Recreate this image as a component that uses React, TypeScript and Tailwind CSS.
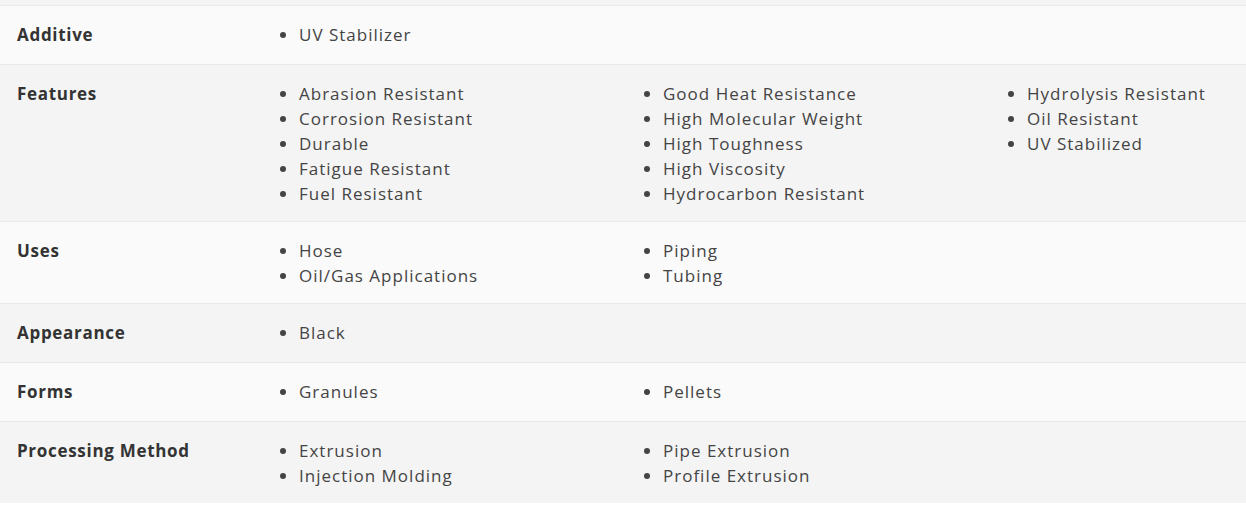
const rows: { label: string; cols: string[][] }[] = [
  { label: 'Additive', cols: [['UV Stabilizer']] },
  {
    label: 'Features',
    cols: [
      ['Abrasion Resistant', 'Corrosion Resistant', 'Durable', 'Fatigue Resistant', 'Fuel Resistant'],
      ['Good Heat Resistance', 'High Molecular Weight', 'High Toughness', 'High Viscosity', 'Hydrocarbon Resistant'],
      ['Hydrolysis Resistant', 'Oil Resistant', 'UV Stabilized'],
    ],
  },
  { label: 'Uses', cols: [['Hose', 'Oil/Gas Applications'], ['Piping', 'Tubing']] },
  { label: 'Appearance', cols: [['Black']] },
  { label: 'Forms', cols: [['Granules'], ['Pellets']] },
  { label: 'Processing Method', cols: [['Extrusion', 'Injection Molding'], ['Pipe Extrusion', 'Profile Extrusion']] },
]

export default function App() {
  return (
    <div className="min-h-[505px] overflow-hidden bg-white font-['Open_Sans',sans-serif] text-[17px] leading-[25px] text-[#444]">
      <div className="h-[5px] bg-[#f4f4f4]" />
      {rows.map((row, i) => (
        <div
          key={row.label}
          className={`flex min-h-[59px] border-t border-[#e9e9e9] pt-[16px] pb-[15px] ${i % 2 === 0 ? 'bg-[#fafafa]' : 'bg-[#f4f4f4]'}`}
        >
          <div className="w-[267px] shrink-0 pl-[17px] font-bold tracking-[0.7px] text-[#333]">{row.label}</div>
          <div className="grid flex-1 grid-cols-[364px_364px_1fr] tracking-[1px]">
            {row.cols.map((col, j) => (
              <ul key={j} className="list-disc pl-[32px] marker:text-[#444]">
                {col.map((item) => (
                  <li key={item}>{item}</li>
                ))}
              </ul>
            ))}
          </div>
        </div>
      ))}
    </div>
  )
}
